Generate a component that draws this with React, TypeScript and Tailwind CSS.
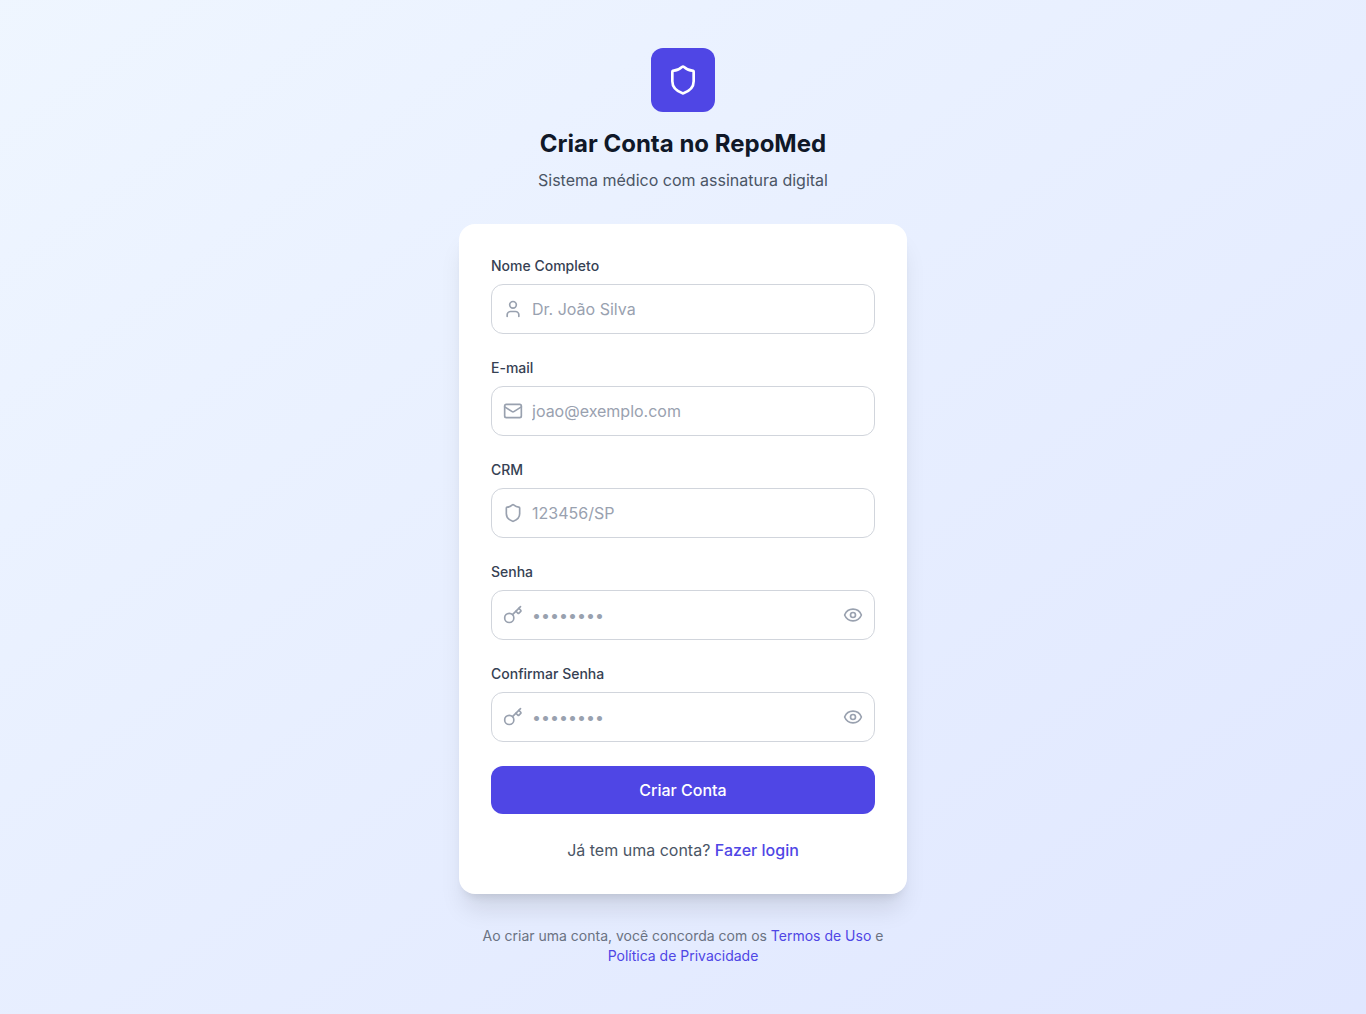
import React from "react";
import { Shield, User, Mail, Key, Eye } from "lucide-react";

function Field({ label, icon: Icon, placeholder, type = "text", eye = false }: { label: string; icon: React.ComponentType<{ className?: string }>; placeholder: string; type?: string; eye?: boolean }) {
  return (
    <div>
      <label className="block text-sm font-medium text-gray-700 mb-2">{label}</label>
      <div className="flex items-center h-[50px] pl-[11px] pr-[11px] gap-[9px] bg-white border border-gray-300 rounded-xl">
        <Icon className="w-5 h-5 text-gray-400 shrink-0" />
        <input
          type={type}
          placeholder={placeholder}
          className="flex-1 min-w-0 bg-transparent outline-none text-base text-gray-900 placeholder:text-gray-400"
        />
        {eye && <Eye className="w-5 h-5 text-gray-400 shrink-0" />}
      </div>
    </div>
  );
}

export default function App() {
  return (
    <div className="min-h-screen bg-gradient-to-br from-blue-50 to-indigo-100 flex flex-col items-center py-12 font-['Inter',sans-serif]">
      <div className="w-16 h-16 bg-[#4f46e5] rounded-xl flex items-center justify-center">
        <Shield className="w-8 h-8 text-white" />
      </div>
      <h1 className="mt-4 text-2xl font-bold text-gray-900">Criar Conta no RepoMed</h1>
      <p className="mt-2 text-base text-gray-600">Sistema médico com assinatura digital</p>

      <div className="mt-8 w-[448px] bg-white rounded-2xl shadow-xl p-8">
        <div className="flex flex-col gap-6">
          <Field label="Nome Completo" icon={User} placeholder="Dr. João Silva" />
          <Field label="E-mail" icon={Mail} placeholder="joao@exemplo.com" type="email" />
          <Field label="CRM" icon={Shield} placeholder="123456/SP" />
          <Field label="Senha" icon={Key} placeholder="••••••••" type="password" eye />
          <Field label="Confirmar Senha" icon={Key} placeholder="••••••••" type="password" eye />
          <button className="h-12 w-full bg-[#4f46e5] text-white font-medium text-base rounded-xl">Criar Conta</button>
        </div>
        <p className="mt-6 text-center text-base text-gray-600">
          Já tem uma conta? <a className="text-[#4f46e5] font-medium">Fazer login</a>
        </p>
      </div>

      <p className="mt-8 w-[448px] text-center text-sm text-gray-500">
        Ao criar uma conta, você concorda com os <a className="text-[#4f46e5]">Termos de Uso</a> e{" "}
        <a className="text-[#4f46e5]">Política de Privacidade</a>
      </p>
    </div>
  );
}
